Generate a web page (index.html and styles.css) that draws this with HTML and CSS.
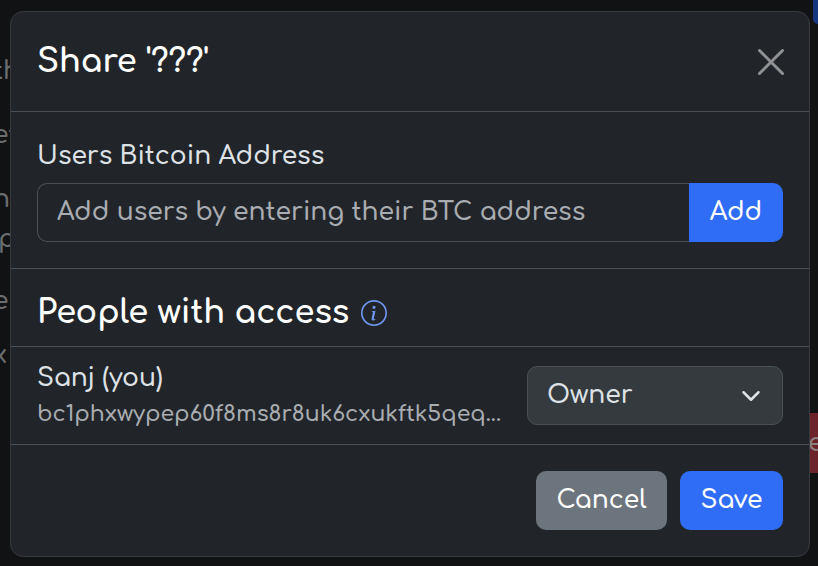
FILE: index.html
```
<!DOCTYPE html>
<html lang="en">
<head>
    <meta charset="UTF-8">
    <meta name="viewport" content="width=device-width, initial-scale=1.0">
    <title>Share</title>
    <link rel="stylesheet" href="styles.css">
</head>
<body>
    <!-- Page behind the dialog -->
    <div class="page" aria-hidden="true">
        <div class="page-text">
            <p>th</p>
            <p>et</p>
            <p class="tight">nc</p>
            <p class="sub">p</p>
            <p class="item">e</p>
            <p>x</p>
        </div>
        <div class="page-actions">
            <span class="page-primary"></span>
            <span class="page-danger">e</span>
        </div>
    </div>

    <form class="modal" role="dialog" aria-labelledby="shareTitle">
        <header class="modal-header">
            <h1 id="shareTitle">Share '???'</h1>
            <button type="button" class="close" aria-label="Close">
                <svg width="28" height="28" viewBox="0 0 28 28">
                    <path d="M2.500 2.500L25.500 25.500M25.500 2.500L2.500 25.500" />
                </svg>
            </button>
        </header>

        <section class="add-user">
            <label for="address">Users Bitcoin Address</label>
            <div class="input-group">
                <input type="text" id="address" placeholder="Add users by entering their BTC address">
                <button type="button" class="button primary">Add</button>
            </div>
        </section>

        <section class="access-title">
            <h2>People with access</h2>
            <svg class="info" width="26" height="26" viewBox="0 0 16 16">
                <path d="M8 15A7 7 0 1 1 8 1a7 7 0 0 1 0 14zm0 1A8 8 0 1 0 8 0a8 8 0 0 0 0 16z" />
                <path d="m8.930 6.588-2.290.287-.082.380.450.083c.294.070.352.176.288.469l-.738 3.468c-.194.897.105 1.319.808 1.319.545 0 1.178-.252 1.465-.598l.088-.416c-.2.176-.492.246-.686.246-.275 0-.375-.193-.304-.533L8.930 6.588zM9 4.500a1 1 0 1 1-2 0 1 1 0 0 1 2 0z" />
            </svg>
        </section>

        <section class="user">
            <div class="user-info">
                <label for="role">Sanj (you)</label>
                <div class="user-address">bc1phxwypep60f8ms8r8uk6cxukftk5qeq...</div>
            </div>
            <div class="select-wrap">
                <select id="role">
                    <option>Owner</option>
                </select>
                <svg class="chevron" width="20" height="20" viewBox="0 0 16 16">
                    <path d="m2 5 6 6 6-6" />
                </svg>
            </div>
        </section>

        <footer class="modal-footer">
            <button type="button" class="button secondary">Cancel</button>
            <button type="submit" class="button primary">Save</button>
        </footer>
    </form>
</body>
</html>
```

FILE: styles.css
```
* {
    box-sizing: border-box;
}

body {
    margin: 0;
    padding: 11px 8px 9px 10px;
    position: relative;
    background-color: #111214;
    color: #dee2e6;
    font-family: Comfortaa, Lato, sans-serif;
    font-size: 25px;
    font-weight: 600;
    line-height: 36px;
}

h1,
h2,
p {
    margin: 0;
}

h1,
h2 {
    color: #fff;
    font-size: 32px;
    font-weight: 700;
    line-height: 40px;
}

button,
input,
select {
    font: inherit;
    margin: 0;
}

button {
    cursor: pointer;
}

/* Page behind the dialog */
.page {
    position: absolute;
    inset: 0;
    overflow: hidden;
    display: flex;
    justify-content: space-between;
    color: #6b6d6f;
}

.page-text {
    width: 24px;
    padding-top: 53px;
    margin-left: -7px;
}

.page-text p {
    margin-bottom: 28px;
}

.page-text .tight {
    margin-bottom: 4px;
}

.page-text .sub {
    padding-left: 5px;
    margin-bottom: 26px;
}

.page-text .item {
    margin-bottom: 18px;
}

.page-actions {
    display: flex;
    flex-direction: column;
    justify-content: space-between;
    align-items: flex-end;
    padding-bottom: 93px;
}

.page-primary {
    width: 5px;
    height: 24px;
    background-color: #173680;
    border-bottom-left-radius: 6px;
}

.page-danger {
    width: 10px;
    height: 60px;
    line-height: 60px;
    background-color: #6b2228;
    color: #8b7f81;
}

/* Dialog */
.modal {
    position: relative;
    background-color: #212529;
    border: 1px solid #37393d;
    border-radius: 13px;
}

.modal-header {
    display: flex;
    justify-content: space-between;
    align-items: center;
    height: 100px;
    padding: 0 24px 0 26px;
    border-bottom: 1px solid #495057;
}

.close {
    display: flex;
    padding: 0;
    background: none;
    border: none;
}

.close path {
    fill: none;
    stroke: #909294;
    stroke-width: 3;
    stroke-linecap: round;
}

.add-user {
    padding: 26px;
    border-bottom: 1px solid #495057;
}

.add-user label {
    display: block;
    margin-bottom: 9px;
}

.input-group {
    display: flex;
}

.input-group input {
    flex: 1;
    min-width: 0;
    height: 59px;
    padding: 0 19px 2px;
    color: #dee2e6;
    background-color: #212529;
    border: 1px solid #495057;
    border-right: none;
    border-radius: 10px 0 0 10px;
}

.input-group input::placeholder {
    color: #a9acb0;
    opacity: 1;
}

.input-group .button {
    width: 94px;
    border-radius: 0 10px 10px 0;
}

.button {
    height: 59px;
    padding: 0 0 2px;
    color: #fff;
    border: none;
    border-radius: 10px;
}

.primary {
    width: 103px;
    background-color: #306df6;
}

.secondary {
    width: 131px;
    background-color: #6c757d;
}

.access-title {
    display: flex;
    align-items: center;
    gap: 12px;
    height: 78px;
    padding: 10px 26px 0;
    border-bottom: 1px solid #495057;
}

.info {
    fill: #6f97f0;
}

.user {
    display: flex;
    align-items: center;
    justify-content: space-between;
    gap: 18px;
    padding: 19px 26px;
    border-bottom: 1px solid #495057;
}

.user-info {
    flex: 1;
    min-width: 0;
    height: 59px;
    display: flex;
    flex-direction: column;
    justify-content: center;
}

.user-address {
    color: #a9acb0;
    font-size: 22px;
    white-space: nowrap;
}

.select-wrap {
    position: relative;
    width: 256px;
}

.select-wrap select {
    width: 100%;
    height: 59px;
    padding: 0 19px 2px;
    appearance: none;
    color: #dee2e6;
    background-color: #343a3e;
    border: 1px solid #495057;
    border-radius: 10px;
}

.chevron {
    position: absolute;
    right: 22px;
    top: 20px;
    pointer-events: none;
    fill: none;
    stroke: #dee2e6;
    stroke-width: 2;
    stroke-linecap: round;
    stroke-linejoin: round;
}

.modal-footer {
    display: flex;
    justify-content: flex-end;
    gap: 13px;
    padding: 26px;
}
```
